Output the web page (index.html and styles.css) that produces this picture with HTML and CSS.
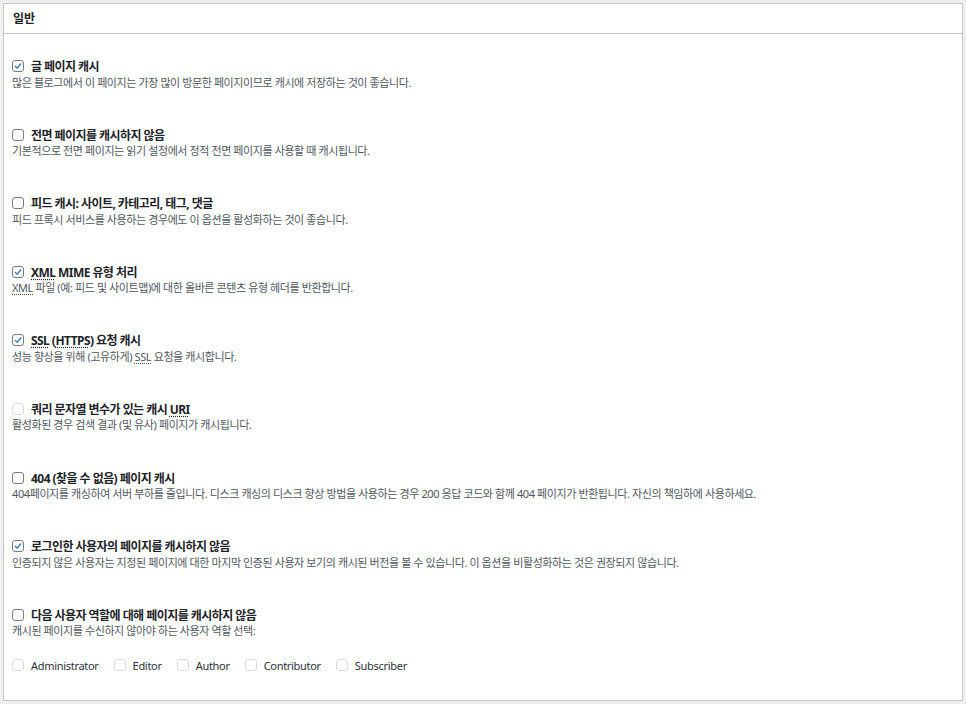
FILE: index.html
```html
<!DOCTYPE html>
<html lang="ko">
<head>
<meta charset="utf-8">
<title>일반</title>
<link rel="stylesheet" href="styles.css">
</head>
<body>
<div class="panel">
  <div class="panel-head">일반</div>
  <div class="panel-body">
    <div class="opt">
      <label class="opt-label"><span class="cb on"><svg viewBox="0 0 12 12"><path d="M2.4 6.1 L5 8.7 L9.8 3"/></svg></span><span>글 페이지 캐시</span></label>
      <p class="desc">많은 블로그에서 이 페이지는 가장 많이 방문한 페이지이므로 캐시에 저장하는 것이 좋습니다.</p>
    </div>
    <div class="opt">
      <label class="opt-label"><span class="cb"></span><span>전면 페이지를 캐시하지 않음</span></label>
      <p class="desc">기본적으로 전면 페이지는 읽기 설정에서 정적 전면 페이지를 사용할 때 캐시됩니다.</p>
    </div>
    <div class="opt">
      <label class="opt-label"><span class="cb"></span><span>피드 캐시: 사이트, 카테고리, 태그, 댓글</span></label>
      <p class="desc">피드 프록시 서비스를 사용하는 경우에도 이 옵션을 활성화하는 것이 좋습니다.</p>
    </div>
    <div class="opt">
      <label class="opt-label"><span class="cb on"><svg viewBox="0 0 12 12"><path d="M2.4 6.1 L5 8.7 L9.8 3"/></svg></span><span><abbr title="Extensible Markup Language">XML</abbr> MIME 유형 처리</span></label>
      <p class="desc"><abbr title="Extensible Markup Language">XML</abbr> 파일 (예: 피드 및 사이트맵)에 대한 올바른 콘텐츠 유형 헤더를 반환합니다.</p>
    </div>
    <div class="opt">
      <label class="opt-label"><span class="cb on"><svg viewBox="0 0 12 12"><path d="M2.4 6.1 L5 8.7 L9.8 3"/></svg></span><span><abbr title="Secure Sockets Layer">SSL</abbr> (<abbr title="HyperText Transfer Protocol over SSL">HTTPS</abbr>) 요청 캐시</span></label>
      <p class="desc">성능 향상을 위해 (고유하게) <abbr title="Secure Sockets Layer">SSL</abbr> 요청을 캐시합니다.</p>
    </div>
    <div class="opt">
      <label class="opt-label"><span class="cb off"></span><span>쿼리 문자열 변수가 있는 캐시 <abbr title="Uniform Resource Indicator">URI</abbr></span></label>
      <p class="desc">활성화된 경우 검색 결과 (및 유사) 페이지가 캐시됩니다.</p>
    </div>
    <div class="opt">
      <label class="opt-label"><span class="cb"></span><span>404 (찾을 수 없음) 페이지 캐시</span></label>
      <p class="desc">404페이지를 캐싱하여 서버 부하를 줄입니다. 디스크 캐싱의 디스크 향상 방법을 사용하는 경우 200 응답 코드와 함께 404 페이지가 반환됩니다. 자신의 책임하에 사용하세요.</p>
    </div>
    <div class="opt">
      <label class="opt-label"><span class="cb on"><svg viewBox="0 0 12 12"><path d="M2.4 6.1 L5 8.7 L9.8 3"/></svg></span><span>로그인한 사용자의 페이지를 캐시하지 않음</span></label>
      <p class="desc">인증되지 않은 사용자는 지정된 페이지에 대한 마지막 인증된 사용자 보기의 캐시된 버전을 볼 수 있습니다. 이 옵션을 비활성화하는 것은 권장되지 않습니다.</p>
    </div>
    <div class="opt">
      <label class="opt-label"><span class="cb"></span><span>다음 사용자 역할에 대해 페이지를 캐시하지 않음</span></label>
      <p class="desc">캐시된 페이지를 수신하지 않아야 하는 사용자 역할 선택:</p>
    </div>
    <div class="roles">
      <label class="role"><span class="cb off"></span><span>Administrator</span></label>
      <label class="role"><span class="cb off"></span><span>Editor</span></label>
      <label class="role"><span class="cb off"></span><span>Author</span></label>
      <label class="role"><span class="cb off"></span><span>Contributor</span></label>
      <label class="role"><span class="cb off"></span><span>Subscriber</span></label>
    </div>
  </div>
</div>
</body>
</html>
```
FILE: styles.css
```css
html, body {
  margin: 0;
  padding: 0;
}
body {
  background: #f0f0f1;
  font-family: "Noto Sans", "Noto Sans CJK KR", sans-serif;
  color: #1d2327;
}
.panel {
  margin: 3px;
  width: 958px;
  height: 696px;
  background: #fff;
  border: 1px solid #c3c4c7;
}
.panel-head {
  height: 29px;
  line-height: 29px;
  padding-left: 9px;
  font-size: 12px;
  font-weight: 700;
  border-bottom: 1px solid #c3c4c7;
}
.panel-body {
  padding: 23.5px 8px 0;
}
.opt {
  margin-bottom: 35.1px;
}
.opt-label {
  display: flex;
  align-items: center;
  height: 17px;
  font-size: 12px;
  font-weight: 700;
  letter-spacing: -0.55px;
  white-space: nowrap;
}
.desc {
  margin: 0;
  height: 16.5px;
  line-height: 16.5px;
  font-size: 11px;
  letter-spacing: -0.4px;
  color: #50575e;
  white-space: nowrap;
}
abbr {
  text-decoration: underline dotted;
  text-underline-offset: 2px;
}
.cb {
  flex: none;
  box-sizing: border-box;
  width: 12px;
  height: 12px;
  margin-right: 7px;
  border: 1px solid #787c82;
  border-radius: 3px;
  background: #fff;
  display: flex;
  align-items: center;
  justify-content: center;
}
.cb svg {
  width: 12px;
  height: 12px;
  fill: none;
  stroke: #3582c4;
  stroke-width: 1.7;
}
.cb.off {
  border-color: #dcdcde;
}
.roles {
  margin-top: -18px;
  display: flex;
  gap: 15px;
}
.role {
  display: flex;
  align-items: center;
  height: 17px;
  font-size: 11px;
  letter-spacing: -0.3px;
  color: #2c3338;
}
```
